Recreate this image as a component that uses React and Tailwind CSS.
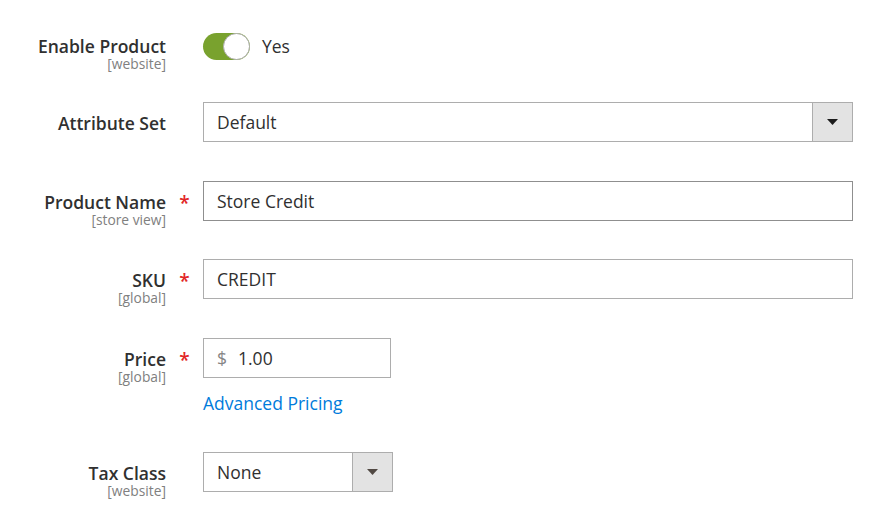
import React from "react";

function Label({ title, scope, required, pt = "pt-[11px]" }) {
  return (
    <div className="flex w-[203px] shrink-0">
      <div className={`w-[166px] flex flex-col items-end ${pt}`}>
        <span className="text-[17.5px] leading-[20px] font-semibold text-[#303030] whitespace-nowrap">{title}</span>
        {scope && (
          <span className="text-[13.8px] leading-[16px] text-[#808080] whitespace-nowrap">{scope}</span>
        )}
      </div>
      <div className={`w-[37px] flex justify-center ${pt}`}>
        {required && <span className="text-[#e22626] text-[19px] leading-[22px] font-semibold">*</span>}
      </div>
    </div>
  );
}

function Arrow({ color }) {
  return (
    <svg width="11" height="6" viewBox="0 0 11 6">
      <polygon points="0,0 11,0 5.5,6" fill={color} />
    </svg>
  );
}

export default function App() {
  return (
    <div className="w-[893px] h-[527px] bg-white overflow-hidden" style={{ fontFamily: '"Open Sans", sans-serif' }}>
      <div className="pt-[33px]">
        {/* Enable Product */}
        <div className="flex h-[27px]">
          <Label title="Enable Product" scope="[website]" pt="pt-[3px]" />
          <div className="flex items-center">
            <div className="relative w-[47px] h-[27px] rounded-full bg-[#79a22e]">
              <div className="absolute right-0 top-0 w-[27px] h-[27px] rounded-full bg-white border border-[#adadad]" />
            </div>
            <span className="ml-[12px] text-[17.5px] text-[#303030]">Yes</span>
          </div>
        </div>

        {/* Attribute Set */}
        <div className="flex h-[40px] mt-[42px]">
          <Label title="Attribute Set" />
          <div className="flex w-[650px] h-[40px] border border-[#adadad]">
            <div className="flex-1 flex items-center pl-[13px] text-[17.5px] text-[#303030]">Default</div>
            <div className="w-[40px] border-l border-[#adadad] bg-[#e3e3e3] flex items-center justify-center">
              <Arrow color="#1c1c1c" />
            </div>
          </div>
        </div>

        {/* Product Name */}
        <div className="flex h-[40px] mt-[39px]">
          <Label title="Product Name" scope="[store view]" required />
          <div className="flex items-center w-[650px] h-[40px] border border-[#8f8f8f] pl-[13px] text-[17.5px] text-[#303030]">
            Store Credit
          </div>
        </div>

        {/* SKU */}
        <div className="flex h-[40px] mt-[38px]">
          <Label title="SKU" scope="[global]" required />
          <div className="flex items-center w-[650px] h-[40px] border border-[#adadad] pl-[13px] text-[17.5px] text-[#303030]">
            CREDIT
          </div>
        </div>

        {/* Price */}
        <div className="flex mt-[39px]">
          <Label title="Price" scope="[global]" required />
          <div className="flex flex-col">
            <div className="flex items-center w-[188px] h-[40px] border border-[#adadad] pl-[13px] text-[17.5px]">
              <span className="text-[#858585]">$</span>
              <span className="ml-[11px] text-[#303030]">1.00</span>
            </div>
            <a className="mt-[13px] text-[17.5px] leading-[24px] text-[#007bdb] whitespace-nowrap">Advanced Pricing</a>
          </div>
        </div>

        {/* Tax Class */}
        <div className="flex h-[40px] mt-[37px]">
          <Label title="Tax Class" scope="[website]" />
          <div className="flex w-[190px] h-[40px] border border-[#adadad]">
            <div className="flex-1 flex items-center pl-[13px] text-[17.5px] text-[#303030]">None</div>
            <div className="w-[40px] border-l border-[#adadad] bg-[#e3e3e3] flex items-center justify-center">
              <Arrow color="#514943" />
            </div>
          </div>
        </div>
      </div>
    </div>
  );
}
